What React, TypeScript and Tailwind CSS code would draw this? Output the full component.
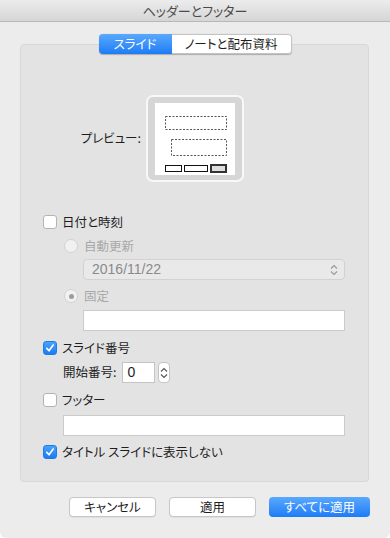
import React from 'react';

const font = {
  fontFamily: '"Noto Sans CJK JP", "Noto Sans", sans-serif',
  fontFeatureSettings: '"palt"',
};

const Check = ({ checked }: { checked: boolean }) =>
  checked ? (
    <span className="w-[14px] h-[14px] rounded-[3px] bg-gradient-to-b from-[#4aa2fd] to-[#1a7bf5] border border-[#1f7ae8] flex items-center justify-center shrink-0">
      <svg width="10" height="10" viewBox="0 0 10 10">
        <path d="M1.8 5.4 L4 7.8 L8.2 2" fill="none" stroke="white" strokeWidth="1.6" strokeLinecap="round" strokeLinejoin="round" />
      </svg>
    </span>
  ) : (
    <span className="w-[14px] h-[14px] rounded-[3px] bg-white border border-[#b4b4b4] shrink-0" />
  );

const Radio = ({ on }: { on?: boolean }) => (
  <span className="w-[14px] h-[14px] rounded-full bg-[#f1f1f1] border border-[#d3d3d3] flex items-center justify-center shrink-0">
    {on && <span className="w-[5px] h-[5px] rounded-full bg-[#9d9d9d]" />}
  </span>
);

const UpDown = ({ color = '#7a7a7a' }: { color?: string }) => (
  <svg width="8" height="12" viewBox="0 0 8 12">
    <path d="M1 4.5 L4 1.5 L7 4.5 M1 7.5 L4 10.5 L7 7.5" fill="none" stroke={color} strokeWidth="1.1" />
  </svg>
);

export default function App() {
  return (
    <div className="w-[390px] h-[538px] bg-white text-[12.5px] text-[#1e1e1e]" style={font}>
      <div className="h-full bg-[#ececec] rounded-b-[6px] flex flex-col">
        {/* Title bar */}
        <div className="h-[22px] shrink-0 bg-gradient-to-b from-[#ececec] to-[#d6d6d6] border-b border-[#b8b8b8] flex items-center justify-center text-[#4b4b4b] text-[13px]">
          ヘッダーとフッター
        </div>

        {/* Tabs */}
        <div className="mt-[12px] flex justify-center relative z-10">
          <div className="flex h-[20px] rounded-[4px] overflow-hidden shadow-[0_0.5px_1px_rgba(0,0,0,0.25)]">
            <div className="w-[73px] bg-gradient-to-b from-[#59a8fd] to-[#1b7cf6] text-white flex items-center justify-center">スライド</div>
            <div className="w-[120px] bg-white border border-l-0 border-[#c4c4c4] rounded-r-[4px] flex items-center justify-center">ノートと配布資料</div>
          </div>
        </div>

        {/* Group box */}
        <div className="-mt-[10px] ml-[20px] mr-[21px] h-[438px] bg-[#e3e3e3] border border-[#d8d8d8] rounded-[4px] pt-[50px] pb-[19px]">
          {/* Preview */}
          <div className="flex items-center">
            <div className="w-[120px] text-right">プレビュー:</div>
            <div className="ml-[5px] w-[98px] h-[87px] rounded-[7px] border-2 border-[#f8f8f8] bg-[#d6d6d6] flex items-center justify-center">
              <svg width="80" height="72" viewBox="0 0 80 72" className="bg-white">
                <rect x="10.5" y="13.5" width="61" height="13" fill="none" stroke="#555" strokeWidth="1" strokeDasharray="2 1.5" />
                <rect x="16.5" y="36.5" width="55" height="16" fill="none" stroke="#555" strokeWidth="1" strokeDasharray="2 1.5" />
                <rect x="10.5" y="62.5" width="16" height="6" fill="none" stroke="#111" strokeWidth="1" />
                <rect x="29.5" y="62.5" width="23" height="6" fill="none" stroke="#111" strokeWidth="1" />
                <rect x="56" y="62" width="15" height="7" fill="#ddd" stroke="#333" strokeWidth="2" />
              </svg>
            </div>
          </div>

          {/* 日付と時刻 */}
          <div className="mt-[30px] h-[20px] ml-[22px] flex items-center gap-[5px]">
            <Check checked={false} />
            <span>日付と時刻</span>
          </div>
          <div className="mt-[4px] h-[20px] ml-[43px] flex items-center gap-[6px] text-[#a8a8a8]">
            <Radio />
            <span>自動更新</span>
          </div>
          <div className="mt-[3px] ml-[62px] mr-[23px] h-[21px] rounded-[4px] border border-[#d2d2d2] bg-[#e9e9e9] flex items-center justify-between pl-[8px] pr-[6px] text-[#8a8a8a] text-[14px]">
            <span style={{ fontFamily: '"Liberation Sans", "Noto Sans", sans-serif' }}>2016/11/22</span>
            <UpDown color="#999" />
          </div>
          <div className="mt-[6px] h-[20px] ml-[43px] flex items-center gap-[6px] text-[#a8a8a8]">
            <Radio on />
            <span>固定</span>
          </div>
          <div className="mt-[4px] ml-[62px] mr-[23px] h-[21px] bg-white border border-[#cbcbcb]" />

          {/* スライド番号 */}
          <div className="mt-[7px] h-[20px] ml-[22px] flex items-center gap-[5px]">
            <Check checked />
            <span>スライド番号</span>
          </div>
          <div className="mt-[4px] ml-[42px] h-[21px] flex items-center">
            <span>開始番号:</span>
            <div className="ml-[6px] w-[33px] h-[21px] bg-white border border-[#c4c4c4] flex items-center pl-[4px] text-[14px]" style={{ fontFamily: '"Liberation Sans", sans-serif' }}>0</div>
            <div className="ml-[3px] w-[12px] h-[21px] bg-white border border-[#c4c4c4] rounded-[4px] flex items-center justify-center">
              <UpDown color="#555" />
            </div>
          </div>

          {/* フッター */}
          <div className="mt-[7px] h-[20px] ml-[22px] flex items-center gap-[5px]">
            <Check checked={false} />
            <span>フッター</span>
          </div>
          <div className="mt-[5px] ml-[42px] mr-[23px] h-[21px] bg-white border border-[#cbcbcb]" />

          <div className="mt-[6px] h-[20px] ml-[22px] flex items-center gap-[5px]">
            <Check checked />
            <span>タイトル スライドに表示しない</span>
          </div>
        </div>

        {/* Buttons */}
        <div className="mt-[15px] flex justify-end gap-[13px] pr-[20px]">
          <button className="w-[87px] h-[20px] bg-white border border-[#c6c6c6] rounded-[4px] flex items-center justify-center shadow-[0_0.5px_0.5px_rgba(0,0,0,0.1)]">キャンセル</button>
          <button className="w-[87px] h-[20px] bg-white border border-[#c6c6c6] rounded-[4px] flex items-center justify-center shadow-[0_0.5px_0.5px_rgba(0,0,0,0.1)]">適用</button>
          <button className="w-[101px] h-[20px] bg-gradient-to-b from-[#59a8fd] to-[#1b7cf6] text-white rounded-[4px] flex items-center justify-center">すべてに適用</button>
        </div>
      </div>
    </div>
  );
}
